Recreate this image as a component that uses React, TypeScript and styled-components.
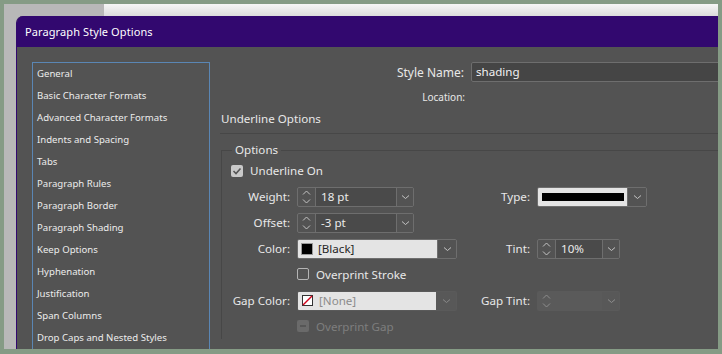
import React from 'react';
import styled, { createGlobalStyle } from 'styled-components';

const GlobalStyle = createGlobalStyle`
  html, body {
    margin: 0;
    padding: 0;
    background: #859b85;
  }
  body {
    font-family: "Noto Sans", "Segoe UI", sans-serif;
  }
`;

const Frame = styled.div`
  width: 722px;
  height: 354px;
  box-sizing: border-box;
  padding: 4px 4px 5px 4px;
  background: #859b85;
  overflow: hidden;
`;

const Desktop = styled.div`
  height: 100%;
  display: grid;
  grid-template-columns: 12px 1fr;
  grid-template-rows: 12px 1fr;
  background: #b8b8b8;
`;

const TopStrip = styled.div`
  grid-column: 1 / -1;
  display: flex;
`;

const StripGap = styled.div`
  width: 100px;
`;

const StripWindow = styled.div`
  flex: 1;
  background: linear-gradient(#f6f6f6, #dcdcdc);
`;

const Dialog = styled.div`
  grid-column: 2;
  grid-row: 2;
  min-height: 0;
  display: flex;
  flex-direction: column;
  border-top-left-radius: 7px;
  border-left: 1px solid #32086f;
  overflow: hidden;
  background: #535353;
`;

const TitleBar = styled.div`
  height: 31px;
  flex: none;
  display: flex;
  align-items: center;
  padding-left: 8px;
  background: #32086f;
  color: #ffffff;
  font-size: 11px;
  letter-spacing: 0.1px;
`;

const Body = styled.div`
  flex: 1;
  min-height: 0;
  display: flex;
`;

const SideWrap = styled.div`
  flex: none;
  padding: 15px 0 0 15px;
  display: flex;
`;

const SideList = styled.ul`
  list-style: none;
  margin: 0;
  padding: 0;
  width: 178px;
  box-sizing: border-box;
  border: 1px solid #5a86b4;
  border-bottom: none;
`;

const SideItem = styled.li`
  height: 22px;
  line-height: 21px;
  padding-left: 4px;
  font-size: 9.6px;
  color: #ececec;
  white-space: nowrap;
`;

const Content = styled.div`
  flex: 1;
  min-width: 0;
  overflow: hidden;
  padding-top: 15px;
  color: #e8e8e8;
  font-size: 11.6px;
`;

const NameRow = styled.div`
  display: flex;
  align-items: center;
  height: 20px;
`;

const RightLabel = styled.div<{ $w: number; $size?: number }>`
  width: ${p => p.$w}px;
  flex: none;
  text-align: right;
  font-size: ${p => p.$size ?? 12}px;
  white-space: nowrap;
`;

const NameInput = styled.div`
  flex: none;
  width: 320px;
  height: 20px;
  margin-left: 7px;
  box-sizing: border-box;
  border: 1px solid #6e6e6e;
  border-radius: 2px;
  background: #454545;
  color: #f2f2f2;
  padding-left: 4px;
  line-height: 18px;
`;

const LocationRow = styled.div`
  display: flex;
  height: 14px;
  line-height: 14px;
  margin-top: 8px;
`;

const SectionTitle = styled.div`
  margin: 7px 0 0 11px;
  height: 16px;
  line-height: 16px;
`;

const Divider = styled.div`
  height: 1px;
  margin: 6px 0 0 10px;
  background: #474747;
`;

const Group = styled.fieldset`
  margin: 8px 0 0 11px;
  padding: 0;
  min-width: 0;
  border: 1px solid #474747;
  border-right: none;
  border-bottom: none;
`;

const Legend = styled.legend`
  margin-left: 10px;
  padding: 0 3px;
  line-height: 16px;
  font-size: 11.6px;
`;

const Grid = styled.div`
  display: grid;
  grid-template-columns: 68px 160px 66px 1fr;
  grid-template-rows: 25px repeat(6, 26px);
  column-gap: 7px;
  align-items: center;
`;

const CheckRow = styled.div<{ $from: number; $indent?: number; $disabled?: boolean }>`
  grid-column: ${p => p.$from} / -1;
  display: flex;
  align-items: center;
  gap: 7px;
  padding-left: ${p => p.$indent ?? 0}px;
  color: ${p => (p.$disabled ? '#7e7e7e' : '#e8e8e8')};
`;

const Box = styled.span<{ $state: 'on' | 'off' | 'disabled' }>`
  width: 12px;
  height: 12px;
  box-sizing: border-box;
  border-radius: 2px;
  display: inline-flex;
  align-items: center;
  justify-content: center;
  border: 1px solid ${p => (p.$state === 'off' ? '#b4b4b4' : 'transparent')};
  background: ${p => (p.$state === 'on' ? '#c9c9c9' : p.$state === 'disabled' ? '#6a6a6a' : 'transparent')};
`;

const Label = styled.div`
  text-align: right;
  white-space: nowrap;
`;

const Field = styled.div<{ $w: number; $disabled?: boolean }>`
  display: flex;
  width: ${p => p.$w}px;
  height: 20px;
  margin-top: 1px;
  box-sizing: border-box;
  border: 1px solid ${p => (p.$disabled ? 'transparent' : '#6e6e6e')};
  border-radius: 2px;
  background: ${p => (p.$disabled ? '#5a5a5a' : '#535353')};
  overflow: hidden;
`;

const Stepper = styled.div<{ $disabled?: boolean }>`
  width: 17px;
  flex: none;
  display: flex;
  align-items: center;
  justify-content: center;
  border-right: 1px solid ${p => (p.$disabled ? 'transparent' : '#6e6e6e')};
`;

const Value = styled.div<{ $disabled?: boolean }>`
  flex: 1;
  padding-left: 5px;
  line-height: 18px;
  background: ${p => (p.$disabled ? 'transparent' : '#4a4a4a')};
  color: #ececec;
`;

const Arrow = styled.div<{ $disabled?: boolean; $w?: number }>`
  width: ${p => p.$w ?? 16}px;
  flex: none;
  display: flex;
  align-items: center;
  justify-content: center;
  border-left: 1px solid ${p => (p.$disabled ? 'transparent' : '#6e6e6e')};
  background: ${p => (p.$disabled ? '#585858' : '#535353')};
`;

const Light = styled.div<{ $disabled?: boolean }>`
  flex: 1;
  display: flex;
  align-items: center;
  gap: 6px;
  padding-left: 4px;
  background: #e4e4e4;
  color: ${p => (p.$disabled ? '#8c8c8c' : '#262626')};
`;

const LineSample = styled.div`
  flex: 1;
  height: 8px;
  margin-right: 3px;
  background: #000000;
`;

const Swatch = styled.span`
  width: 10px;
  height: 10px;
  flex: none;
  background: #000000;
  box-shadow: 0 0 0 1px #9a9a9a;
`;

const Chevron = ({ color = '#c4c4c4' }: { color?: string }) => (
  <svg width="9" height="6" viewBox="0 0 9 6">
    <path d="M1 1.5 L4.5 4.5 L8 1.5" fill="none" stroke={color} strokeWidth="1" />
  </svg>
);

const UpDown = ({ color = '#c4c4c4' }: { color?: string }) => (
  <svg width="9" height="16" viewBox="0 0 9 16">
    <path d="M1 5.5 L4.5 2 L8 5.5" fill="none" stroke={color} strokeWidth="1" />
    <path d="M1 10.5 L4.5 14 L8 10.5" fill="none" stroke={color} strokeWidth="1" />
  </svg>
);

const Check = () => (
  <svg width="10" height="10" viewBox="0 0 10 10">
    <path d="M1.5 5 L4 7.5 L8.5 2.5" fill="none" stroke="#555555" strokeWidth="1.6" />
  </svg>
);

const NoneSwatch = () => (
  <svg width="11" height="11" viewBox="0 0 11 11">
    <rect x="0.5" y="0.5" width="10" height="10" fill="#ffffff" stroke="#333333" />
    <path d="M1 10 L10 1" stroke="#d0021b" strokeWidth="1.5" />
  </svg>
);

const sections = [
  'General',
  'Basic Character Formats',
  'Advanced Character Formats',
  'Indents and Spacing',
  'Tabs',
  'Paragraph Rules',
  'Paragraph Border',
  'Paragraph Shading',
  'Keep Options',
  'Hyphenation',
  'Justification',
  'Span Columns',
  'Drop Caps and Nested Styles',
];

const SpinField = ({ w, value }: { w: number; value: string }) => (
  <Field $w={w}>
    <Stepper>
      <UpDown />
    </Stepper>
    <Value>{value}</Value>
    <Arrow>
      <Chevron />
    </Arrow>
  </Field>
);

export default function App() {
  return (
    <>
      <GlobalStyle />
      <Frame>
        <Desktop>
          <TopStrip>
            <StripGap />
            <StripWindow />
          </TopStrip>
          <Dialog>
            <TitleBar>Paragraph Style Options</TitleBar>
            <Body>
              <SideWrap>
                <SideList>
                  {sections.map(s => (
                    <SideItem key={s}>{s}</SideItem>
                  ))}
                </SideList>
              </SideWrap>
              <Content>
                <NameRow>
                  <RightLabel $w={254}>Style Name:</RightLabel>
                  <NameInput>shading</NameInput>
                </NameRow>
                <LocationRow>
                  <RightLabel $w={255} $size={10}>Location:</RightLabel>
                </LocationRow>
                <SectionTitle>Underline Options</SectionTitle>
                <Divider />
                <Group>
                  <Legend>Options</Legend>
                  <Grid>
                    <CheckRow $from={1} $indent={9}>
                      <Box $state="on">
                        <Check />
                      </Box>
                      Underline On
                    </CheckRow>

                    <Label>Weight:</Label>
                    <SpinField w={117} value="18 pt" />
                    <Label>Type:</Label>
                    <Field $w={110}>
                      <Light>
                        <LineSample />
                      </Light>
                      <Arrow $w={18}>
                        <Chevron />
                      </Arrow>
                    </Field>

                    <Label>Offset:</Label>
                    <SpinField w={117} value="-3 pt" />
                    <span />
                    <span />

                    <Label>Color:</Label>
                    <Field $w={160}>
                      <Light>
                        <Swatch />
                        [Black]
                      </Light>
                      <Arrow $w={18}>
                        <Chevron />
                      </Arrow>
                    </Field>
                    <Label>Tint:</Label>
                    <SpinField w={83} value="10%" />

                    <span />
                    <CheckRow $from={2}>
                      <Box $state="off" />
                      Overprint Stroke
                    </CheckRow>

                    <Label>Gap Color:</Label>
                    <Field $w={160} $disabled>
                      <Light $disabled>
                        <NoneSwatch />
                        [None]
                      </Light>
                      <Arrow $w={19} $disabled>
                        <Chevron color="#8a8a8a" />
                      </Arrow>
                    </Field>
                    <Label>Gap Tint:</Label>
                    <Field $w={83} $disabled>
                      <Stepper $disabled>
                        <UpDown color="#8e8e8e" />
                      </Stepper>
                      <Value $disabled />
                      <Arrow $disabled>
                        <Chevron color="#8e8e8e" />
                      </Arrow>
                    </Field>

                    <span />
                    <CheckRow $from={2} $disabled>
                      <Box $state="disabled">
                        <svg width="6" height="2" viewBox="0 0 6 2">
                          <rect width="6" height="2" fill="#565656" />
                        </svg>
                      </Box>
                      Overprint Gap
                    </CheckRow>
                  </Grid>
                </Group>
              </Content>
            </Body>
          </Dialog>
        </Desktop>
      </Frame>
    </>
  );
}
